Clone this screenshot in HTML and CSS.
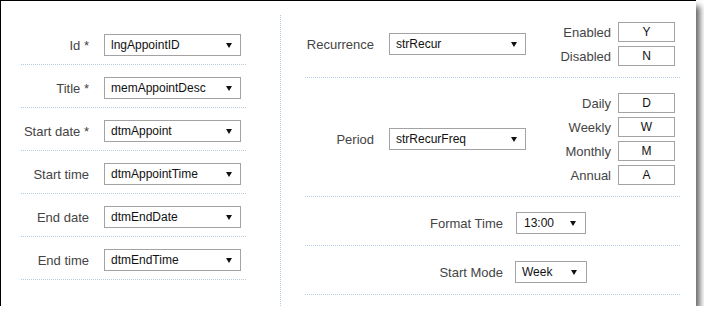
FILE: index.html
```html
<!DOCTYPE html>
<html>
<head>
<meta charset="utf-8">
<link rel="stylesheet" href="styles.css">
</head>
<body>
<div class="panel">
  <div class="col-left">
    <div class="row-l"><span class="lbl">Id *</span><div class="sel"><span>lngAppointID</span><svg class="arr" width="6" height="5" viewBox="0 0 6 5"><polygon points="0,0 6,0 3,5"/></svg></div></div>
    <div class="row-l"><span class="lbl">Title *</span><div class="sel"><span>memAppointDesc</span><svg class="arr" width="6" height="5" viewBox="0 0 6 5"><polygon points="0,0 6,0 3,5"/></svg></div></div>
    <div class="row-l"><span class="lbl">Start date *</span><div class="sel"><span>dtmAppoint</span><svg class="arr" width="6" height="5" viewBox="0 0 6 5"><polygon points="0,0 6,0 3,5"/></svg></div></div>
    <div class="row-l"><span class="lbl">Start time</span><div class="sel"><span>dtmAppointTime</span><svg class="arr" width="6" height="5" viewBox="0 0 6 5"><polygon points="0,0 6,0 3,5"/></svg></div></div>
    <div class="row-l"><span class="lbl">End date</span><div class="sel"><span>dtmEndDate</span><svg class="arr" width="6" height="5" viewBox="0 0 6 5"><polygon points="0,0 6,0 3,5"/></svg></div></div>
    <div class="row-l"><span class="lbl">End time</span><div class="sel"><span>dtmEndTime</span><svg class="arr" width="6" height="5" viewBox="0 0 6 5"><polygon points="0,0 6,0 3,5"/></svg></div></div>
  </div>
  <div class="vline"></div>
  <div class="col-right">
    <div class="row-r first">
      <span class="lbl lbl-r">Recurrence</span>
      <div class="sel"><span>strRecur</span><svg class="arr" width="6" height="5" viewBox="0 0 6 5"><polygon points="0,0 6,0 3,5"/></svg></div>
      <div class="opts">
        <div class="opt"><span class="opt-lbl">Enabled</span><span class="box">Y</span></div>
        <div class="opt"><span class="opt-lbl">Disabled</span><span class="box">N</span></div>
      </div>
    </div>
    <div class="row-r">
      <span class="lbl lbl-r">Period</span>
      <div class="sel"><span>strRecurFreq</span><svg class="arr" width="6" height="5" viewBox="0 0 6 5"><polygon points="0,0 6,0 3,5"/></svg></div>
      <div class="opts">
        <div class="opt"><span class="opt-lbl">Daily</span><span class="box">D</span></div>
        <div class="opt"><span class="opt-lbl">Weekly</span><span class="box">W</span></div>
        <div class="opt"><span class="opt-lbl">Monthly</span><span class="box">M</span></div>
        <div class="opt"><span class="opt-lbl">Annual</span><span class="box">A</span></div>
      </div>
    </div>
    <div class="row-r">
      <span class="lbl lbl-wide">Format Time</span>
      <div class="sel sel-sm sel-time"><span>13:00</span><svg class="arr" width="6" height="5" viewBox="0 0 6 5"><polygon points="0,0 6,0 3,5"/></svg></div>
    </div>
    <div class="row-r">
      <span class="lbl lbl-wide">Start Mode</span>
      <div class="sel sel-sm sel-mode"><span>Week</span><svg class="arr" width="6" height="5" viewBox="0 0 6 5"><polygon points="0,0 6,0 3,5"/></svg></div>
    </div>
  </div>
</div>
</body>
</html>
```

FILE: styles.css
```css
html, body {
  margin: 0;
  padding: 0;
  background: #fff;
}

body {
  font-family: "Liberation Sans", Arial, sans-serif;
  font-size: 13px;
  color: #444;
}

.panel {
  display: flex;
  align-items: flex-start;
  width: 695px;
  height: 305px;
  border-top: 1px solid #000;
  border-left: 1px solid #000;
  background: #fff;
  box-shadow: 5px 5px 6px -1px rgba(0, 0, 0, 0.6);
}

.col-left {
  width: 225px;
  margin-left: 20px;
  padding-top: 21px;
  margin-right: 34px;
}

.row-l {
  display: flex;
  align-items: center;
  padding: 12px 0 8px;
  border-bottom: 1px dotted #b4cde2;
}

.lbl {
  color: #444;
  white-space: nowrap;
  text-align: right;
}

.row-l .lbl {
  width: 68px;
  margin-right: 15px;
}

.sel {
  box-sizing: border-box;
  display: flex;
  align-items: center;
  justify-content: space-between;
  width: 137px;
  height: 22px;
  padding: 0 8px 0 6px;
  border: 1px solid #a3a3a3;
  background: #fff;
  color: #111;
  font-size: 12px;
}

.arr {
  display: block;
  fill: #111;
  flex: none;
}

.vline {
  align-self: stretch;
  width: 0;
  margin-top: 14px;
  border-left: 1px dotted #b4cde2;
}

.col-right {
  width: 375px;
  margin-left: 24px;
  padding-top: 6px;
}

.row-r {
  display: flex;
  align-items: center;
  padding: 15px 0 11px;
  border-bottom: 1px dotted #b4cde2;
}

.row-r.first {
  padding-top: 15px;
}

.lbl-r {
  width: 69px;
  margin-right: 15px;
}

.lbl-wide {
  width: 198px;
  margin-right: 13px;
}

.sel-sm {
  padding: 0 9px 0 7px;
}

.sel-time {
  width: 70px;
}

.sel-mode {
  width: 72px;
  margin-left: -1px;
  padding-left: 6px;
}

.opts {
  display: flex;
  flex-direction: column;
  gap: 4px;
  margin-left: auto;
  margin-right: 5px;
}

.opt {
  display: flex;
  align-items: center;
  justify-content: flex-end;
}

.opt-lbl {
  margin-right: 7px;
  color: #444;
}

.box {
  box-sizing: border-box;
  display: flex;
  align-items: center;
  justify-content: center;
  width: 57px;
  height: 20px;
  border: 1px solid #a3a3a3;
  color: #111;
  font-size: 12px;
}
```
